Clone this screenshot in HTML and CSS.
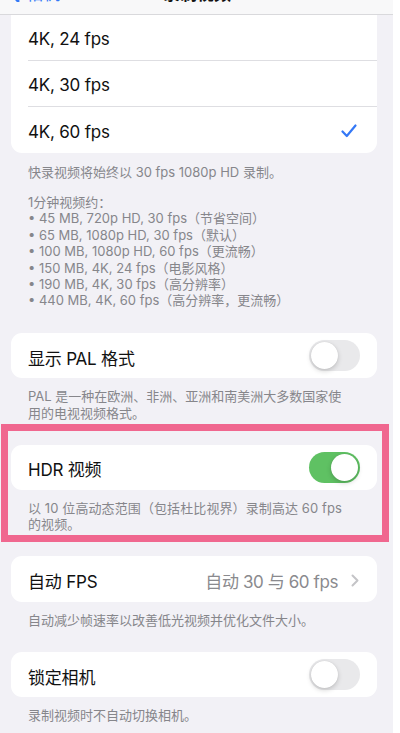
FILE: index.html
```html
<!DOCTYPE html>
<html lang="zh">
<head>
<meta charset="utf-8">
<meta name="viewport" content="width=400">
<title>录制视频</title>
<link rel="stylesheet" href="styles.css">
</head>
<body>
<div class="screen">
  <header class="nav">
    <div class="nav-inner">
      <span class="back">
        <svg class="back-icon" width="12" height="20" viewBox="0 0 12 20"><path d="M10 1 L2 10 L10 19" fill="none" stroke="#3478f6" stroke-width="3" stroke-linecap="round" stroke-linejoin="round"/></svg>
        <span>相机</span>
      </span>
      <span class="title">录制视频</span>
    </div>
  </header>

  <main class="content">
    <section class="group group-first">
      <div class="row"><div class="row-body"><span class="label">4K, 24 fps</span></div></div>
      <div class="row"><div class="row-body"><span class="label">4K, 30 fps</span></div></div>
      <div class="row"><div class="row-body row-check"><span class="label">4K, 60 fps</span>
        <svg class="check" width="16" height="14" viewBox="0 0 16 14"><path d="M1.5 7.5 L5.8 12 L14.5 1.5" fill="none" stroke="#3478f6" stroke-width="2.2" stroke-linecap="round" stroke-linejoin="round"/></svg>
      </div></div>
    </section>
    <div class="footer footer-first">
      <p>快录视频将始终以 30 fps 1080p HD 录制。</p>
      <p class="para">1分钟视频约：<br>
      • 45 MB, 720p HD, 30 fps（节省空间）<br>
      • 65 MB, 1080p HD, 30 fps（默认）<br>
      • 100 MB, 1080p HD, 60 fps（更流畅）<br>
      • 150 MB, 4K, 24 fps（电影风格）<br>
      • 190 MB, 4K, 30 fps（高分辨率）<br>
      • 440 MB, 4K, 60 fps（高分辨率，更流畅）</p>
    </div>

    <section class="group">
      <div class="row"><div class="row-body"><span class="label">显示 PAL 格式</span><span class="toggle"><span class="knob"></span></span></div></div>
    </section>
    <div class="footer"><p>PAL 是一种在欧洲、非洲、亚洲和南美洲大多数国家使用的电视视频格式。</p></div>

    <div class="highlight">
      <section class="group">
        <div class="row"><div class="row-body"><span class="label">HDR 视频</span><span class="toggle toggle-on"><span class="knob"></span></span></div></div>
      </section>
      <div class="footer footer-wide"><p>以 10 位高动态范围（包括杜比视界）录制高达 60 fps 的视频。</p></div>
      <div class="frame"></div>
    </div>

    <section class="group">
      <div class="row"><div class="row-body"><span class="label">自动 FPS</span>
        <span class="value">自动 30 与 60 fps
          <svg class="chev" width="8" height="13" viewBox="0 0 8 13"><path d="M1.5 1.5 L6.5 6.5 L1.5 11.5" fill="none" stroke="#c4c4c7" stroke-width="2" stroke-linecap="round" stroke-linejoin="round"/></svg>
        </span>
      </div></div>
    </section>
    <div class="footer"><p>自动减少帧速率以改善低光视频并优化文件大小。</p></div>

    <section class="group">
      <div class="row"><div class="row-body"><span class="label">锁定相机</span><span class="toggle"><span class="knob"></span></span></div></div>
    </section>
    <div class="footer"><p>录制视频时不自动切换相机。</p></div>
  </main>
</div>
</body>
</html>
```

FILE: styles.css
```css
* { box-sizing: border-box; }

html, body {
  margin: 0;
  padding: 0;
  background: #ffffff;
}

body {
  font-family: Inter, "Noto Sans CJK SC", "Noto Sans", sans-serif;
  color: #111111;
  -webkit-font-smoothing: antialiased;
}

.screen {
  width: 393px;
  height: 733px;
  overflow: hidden;
  background: #f2f1f6;
}

.nav {
  height: 15px;
  background: #f8f8f9;
  border-bottom: 1px solid #d9d9dc;
  overflow: hidden;
}

.nav-inner {
  height: 30px;
  margin-top: -23px;
  display: flex;
  align-items: center;
  padding-left: 8px;
  font-size: 17px;
}

.back {
  display: flex;
  align-items: center;
  gap: 6px;
  color: #3478f6;
  width: 150px;
}

.title {
  font-weight: 600;
  color: #111;
  margin-left: 5px;
}

.content {
  display: flex;
  flex-direction: column;
}

.group {
  background: #ffffff;
  margin: 0 16px 0 11px;
  border-radius: 11px;
  overflow: hidden;
}

.group-first {
  border-radius: 0 0 11px 11px;
}

.row {
  padding-left: 17px;
}

.row-body {
  height: 45.5px;
  display: flex;
  align-items: center;
  justify-content: space-between;
  padding-right: 17px;
}

.label {
  font-size: 17px;
  letter-spacing: -0.2px;
  color: #111111;
  padding-top: 3px;
}

.group-first .row-body {
  height: 46px;
  border-bottom: 1px solid #dedee2;
}

.group-first .row:last-child .row-body {
  border-bottom: none;
}

.row-check {
  padding-right: 20px;
}

.check {
  display: block;
  margin-top: 2px;
}

.toggle {
  width: 51px;
  height: 31px;
  border-radius: 16px;
  background: #e9e9eb;
  padding: 2px;
  display: flex;
  justify-content: flex-start;
}

.toggle-on {
  background: #5fc163;
  justify-content: flex-end;
}

.knob {
  width: 27px;
  height: 27px;
  border-radius: 50%;
  background: #ffffff;
  box-shadow: 0 2px 5px rgba(0, 0, 0, 0.18), 0 0 1px rgba(0, 0, 0, 0.12);
}

.value {
  display: flex;
  align-items: center;
  gap: 13px;
  font-size: 17px;
  letter-spacing: -0.4px;
  color: #8a8a8e;
  margin-right: 1px;
  padding-top: 3px;
}

.chev {
  display: block;
}

.footer {
  padding: 10px 40px 23.5px 28px;
  font-size: 13px;
  line-height: 16.4px;
  color: #86868b;
}

.footer-first {
  padding-top: 10.5px;
  padding-bottom: 24px;
}

.footer-wide {
  letter-spacing: 0.1px;
}

.footer p {
  margin: 0;
}

.footer .para {
  margin-top: 14px;
}

.highlight {
  position: relative;
  display: flex;
  flex-direction: column;
}

.frame {
  position: absolute;
  top: -21px;
  left: 1px;
  width: 388px;
  height: 118px;
  border: 7px solid #f0678f;
  pointer-events: none;
}
```
